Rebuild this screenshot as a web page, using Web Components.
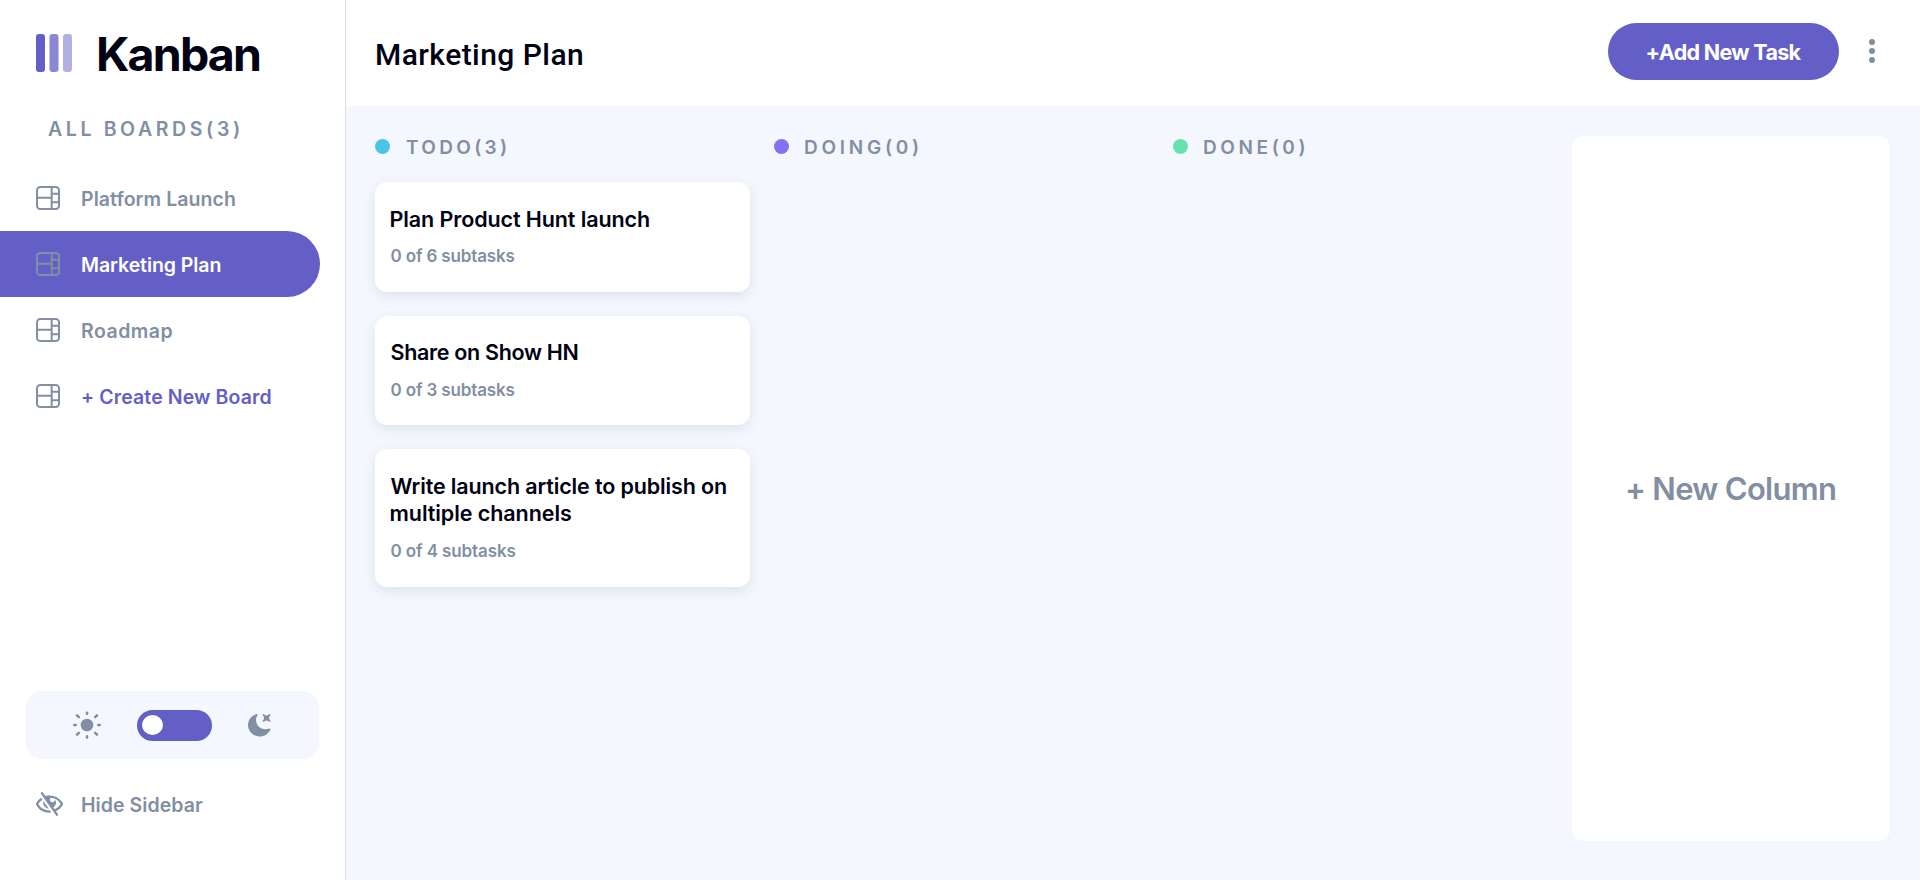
<!DOCTYPE html>
<html lang="en">
<head>
<meta charset="utf-8">
<title>Kanban</title>
<style>
  html, body { height: 100%; }
  body {
    margin: 0;
    font-family: Inter, "Liberation Sans", sans-serif;
    --accent: #635fc7;
    --muted: #828fa3;
    --ink: #000112;
    --canvas: #f4f7fd;
  }
</style>
</head>
<body>
<kanban-app></kanban-app>
<script>
const define = (name, html, setup) => {
  const tpl = document.createElement('template');
  tpl.innerHTML = html;
  customElements.define(name, class extends HTMLElement {
    connectedCallback() {
      if (this.shadowRoot) return;
      this.attachShadow({ mode: 'open' }).append(tpl.content.cloneNode(true));
      if (setup) setup(this, this.shadowRoot);
    }
  });
};

// A one-line label tracked so that its glyphs span the width given in "span".
const ctx = document.createElement('canvas').getContext('2d');
define('tracked-label', `
  <style>:host { display: block; white-space: nowrap; flex: none; }</style><slot></slot>`,
  (el) => {
    const text = el.textContent.trim();
    const cs = getComputedStyle(el);
    ctx.font = `${cs.fontWeight} ${cs.fontSize} ${cs.fontFamily}`;
    const m = ctx.measureText(text);
    const drawn = m.actualBoundingBoxRight + m.actualBoundingBoxLeft;
    const span = Number(el.getAttribute('span'));
    el.style.letterSpacing = ((span - drawn) / (text.length - 1)).toFixed(3) + 'px';
    el.style.marginLeft = m.actualBoundingBoxLeft.toFixed(2) + 'px';
    el.style.width = span + 'px';
  });

const icons = {
  board: ['0 0 16 16', '<path d="M0 2.889A2.889 2.889 0 0 1 2.889 0H13.11A2.889 2.889 0 0 1 16 2.889V13.11A2.888 2.888 0 0 1 13.111 16H2.89A2.889 2.889 0 0 1 0 13.111V2.89Zm1.333 5.555v4.667c0 .859.697 1.556 1.556 1.556h6.889V8.444H1.333Zm8.445-1.333V1.333h-6.89A1.556 1.556 0 0 0 1.334 2.89V7.11h8.445Zm4.889-1.333H11.11v4.444h3.556V5.778Zm0 5.778H11.11v3.11h2a1.556 1.556 0 0 0 1.556-1.555v-1.555Zm0-7.112V2.89a1.555 1.555 0 0 0-1.556-1.556h-2v3.111h3.556Z"/>'],
  hide: ['0 0 18 16', '<path d="M8.522 11.223a4.252 4.252 0 0 1-3.654-5.22l3.654 5.22ZM9 12.25A8.685 8.685 0 0 1 1.5 8a8.612 8.612 0 0 1 2.76-2.864l-.86-1.23A10.112 10.112 0 0 0 .208 7.238a1.5 1.5 0 0 0 0 1.524A10.187 10.187 0 0 0 9 13.75c.414 0 .828-.025 1.239-.074l-1-1.43A8.88 8.88 0 0 1 9 12.25Zm8.792-3.488a10.14 10.14 0 0 1-4.486 4.046l1.504 2.148a.375.375 0 0 1-.092.523l-.648.453a.375.375 0 0 1-.523-.092L3.19 1.044A.375.375 0 0 1 3.282.52L3.93.068a.375.375 0 0 1 .523.092l1.735 2.479A10.308 10.308 0 0 1 9 2.25c3.746 0 7.031 2 8.792 4.988a1.5 1.5 0 0 1 0 1.524ZM16.5 8a8.674 8.674 0 0 0-6.755-4.219A1.75 1.75 0 1 0 12.75 5v-.001a4.25 4.25 0 0 1-1.154 5.366l.834 1.192A8.641 8.641 0 0 0 16.5 8Z"/>'],
  sun: ['-14 -14 28 28', '<circle r="6.3"/><path fill="none" stroke="currentColor" stroke-width="2.6" stroke-linecap="round" d="M0-12.3v1M0 11.3v1.1M-12.7 0h1.4M11.3 0h1.4M-10-9.6l1.8 1.8M10-9.6L8.2-7.8M-10 9.6l1.8-1.8M10 9.6L8.2 7.8"/>'],
  moon: ['0 0 16 16', '<path d="M6.474.682c.434-.11.718.406.481.78A6.067 6.067 0 0 0 6.01 4.72c0 3.418 2.827 6.187 6.314 6.187.89.002 1.77-.182 2.584-.54.408-.18.894.165.724.57-1.16 2.775-3.944 4.73-7.194 4.73-4.292 0-7.771-3.41-7.771-7.615 0-3.541 2.466-6.518 5.807-7.37Zm8.433.07c.442-.294.969.232.674.674l-.525.787a1.943 1.943 0 0 0 0 2.157l.525.788c.295.441-.232.968-.674.673l-.787-.525a1.943 1.943 0 0 0-2.157 0l-.786.525c-.442.295-.97-.232-.675-.673l.525-.788a1.943 1.943 0 0 0 0-2.157l-.525-.787c-.295-.442.232-.968.674-.673l.787.525a1.943 1.943 0 0 0 2.157 0l.787-.526Z"/>'],
  dots: ['0 0 6 24', '<circle cx="3" cy="3" r="3"/><circle cx="3" cy="12" r="3"/><circle cx="3" cy="21" r="3"/>'],
  logo: ['0 0 36 38', '<rect width="9" height="38" rx="3"/><rect x="13.5" width="9" height="38" rx="3" opacity=".75"/><rect x="27" width="9" height="38" rx="3" opacity=".5"/>']
};
define('app-icon', `
  <style>:host { display: block; flex: none; color: var(--muted); } svg { display: block; width: 100%; height: 100%; fill: currentColor; }</style>
  <svg></svg>`,
  (el, root) => {
    const [box, body] = icons[el.getAttribute('name')];
    const svg = root.querySelector('svg');
    svg.setAttribute('viewBox', box);
    svg.innerHTML = body;
  });

define('nav-item', `
  <style>
    :host { display: flex; align-items: center; gap: 22px; height: 66px; width: 320px; box-sizing: border-box; padding-left: 36px;
      color: var(--muted); font-size: 19.5px; font-weight: 600; line-height: 26px; }
    :host([active]) { background: var(--accent); color: #fff; border-radius: 0 33px 33px 0; }
    :host([create]) { color: var(--accent); }
    app-icon { width: 24px; height: 24px; }
    ::slotted(*) { padding-top: 2px; }
  </style>
  <app-icon name="board"></app-icon><slot></slot>`);

define('theme-switch', `
  <style>
    :host { display: flex; align-items: center; height: 68px; width: 293px; box-sizing: border-box; margin-left: 26px;
      padding-left: 47px; background: var(--canvas); border-radius: 16px; }
    .sun { width: 28px; height: 28px; margin-top: -1px; }
    .track { display: flex; align-items: center; width: 75px; height: 31px; margin: 1px 35px 0 36px; box-sizing: border-box; padding-left: 5px;
      background: var(--accent); border-radius: 16px; }
    .knob { width: 21px; height: 20px; border-radius: 50%; background: #fff; margin-top: -1px; }
    .moon { width: 24px; height: 24px; margin-top: -1px; }
  </style>
  <app-icon class="sun" name="sun"></app-icon>
  <div class="track"><div class="knob"></div></div>
  <app-icon class="moon" name="moon"></app-icon>`);

define('side-bar', `
  <style>
    :host { display: flex; flex-direction: column; width: 346px; height: 100%; box-sizing: border-box; border-right: 1px solid #dcdee3; background: #fff; }
    .brand { display: flex; align-items: center; gap: 27px; height: 106px; padding-left: 36px; box-sizing: border-box;
      color: var(--ink); font-size: 46.5px; font-weight: 700; line-height: 60px; }
    .brand app-icon { width: 36px; height: 38px; color: var(--accent); }
    .brand tracked-label { padding-top: 2px; }
    .all { padding: 10px 0 23px 48px; font-size: 19.5px; font-weight: 600; line-height: 26px; color: var(--muted); }
    .foot { margin-top: auto; padding-bottom: 51px; }
    .hide { display: flex; align-items: center; gap: 19px; height: 48px; margin-top: 22px; padding: 0 0 0 36px;
      color: var(--muted); font-size: 19.5px; font-weight: 600; line-height: 26px; }
    .hide app-icon { width: 27px; height: 24px; margin-top: -3px; }
  </style>
  <div class="brand"><app-icon name="logo"></app-icon><tracked-label span="161">Kanban</tracked-label></div>
  <div class="all"><tracked-label span="191">ALL BOARDS(3)</tracked-label></div>
  <nav>
    <nav-item><tracked-label span="153">Platform Launch</tracked-label></nav-item>
    <nav-item active><tracked-label span="138.5">Marketing Plan</tracked-label></nav-item>
    <nav-item><tracked-label span="90.5">Roadmap</tracked-label></nav-item>
    <nav-item create><tracked-label span="188.5">+ Create New Board</tracked-label></nav-item>
  </nav>
  <div class="foot">
    <theme-switch></theme-switch>
    <div class="hide"><app-icon name="hide"></app-icon><tracked-label span="121">Hide Sidebar</tracked-label></div>
  </div>`);

define('top-bar', `
  <style>
    :host { display: flex; align-items: center; height: 106px; box-sizing: border-box; padding: 0 45px 0 31px; background: #fff; }
    .title { font: 500 30px/40px Roboto, sans-serif; color: var(--ink); padding-top: 3px; }
    button { display: flex; align-items: center; justify-content: center; width: 231px; height: 57px; margin: -3px 30px 0 auto; padding: 1px 0 0; border: 0; border-radius: 29px;
      background: var(--accent); color: #fff; font: 700 21.5px/28px Inter, sans-serif; }
    app-icon { width: 6px; height: 24px; margin-top: -4px; }
  </style>
  <tracked-label class="title" span="205">Marketing Plan</tracked-label>
  <button><tracked-label span="155">+Add New Task</tracked-label></button>
  <app-icon name="dots"></app-icon>`);

define('task-card', `
  <style>
    :host { display: block; min-height: 109.67px; box-sizing: border-box; padding: 23.5px 15.5px 24.7px; background: #fff; border-radius: 12px;
      box-shadow: 0 4px 12px rgba(54, 78, 126, .12); }
    .title { font-size: 21.5px; font-weight: 600; line-height: 27.5px; color: var(--ink); }
    .sub { margin-top: 13px; font-size: 17px; font-weight: 600; line-height: 21px; color: var(--muted); }
  </style>
  <div class="title"><slot></slot></div>
  <div class="sub"><slot name="sub"></slot></div>`);

define('board-column', `
  <style>
    :host { display: flex; flex-direction: column; width: 375px; flex: none; }
    header { display: flex; align-items: center; gap: 16px; height: 22px; margin-bottom: 24px;
      color: var(--muted); font-size: 19px; font-weight: 600; line-height: 22px; }
    i { width: 15px; height: 15px; border-radius: 50%; background: var(--dot); margin-top: -1px; }
    ::slotted([slot="name"]) { padding-top: 2px; }
    .cards { display: flex; flex-direction: column; gap: 24px; }
  </style>
  <header><i></i><slot name="name"></slot></header>
  <div class="cards"><slot></slot></div>`);

define('new-column', `
  <style>
    :host { display: flex; align-items: center; justify-content: center; width: 318px; box-sizing: border-box; background: #fff; border-radius: 12px;
      color: var(--muted); font-size: 31px; font-weight: 600; line-height: 40px; padding-right: 2px; }
  </style>
  <tracked-label span="208">+ New Column</tracked-label>`);

define('kanban-app', `
  <style>
    :host { display: grid; grid-template-columns: 346px 1fr; height: 100vh; background: var(--canvas); }
    main { display: flex; flex-direction: column; min-width: 0; }
    .board { flex: 1; display: flex; gap: 24px; padding: 30px 30px 39px 29px; }
  </style>
  <side-bar></side-bar>
  <main>
    <top-bar></top-bar>
    <section class="board">
      <board-column style="--dot:#49c4e5">
        <tracked-label slot="name" span="100">TODO(3)</tracked-label>
        <task-card><tracked-label span="258.5">Plan Product Hunt launch</tracked-label><tracked-label slot="sub" span="124">0 of 6 subtasks</tracked-label></task-card>
        <task-card><tracked-label span="187">Share on Show HN</tracked-label><tracked-label slot="sub" span="124">0 of 3 subtasks</tracked-label></task-card>
        <task-card><tracked-label span="335.5">Write launch article to publish on</tracked-label><tracked-label span="180.5">multiple channels</tracked-label><tracked-label slot="sub" span="125">0 of 4 subtasks</tracked-label></task-card>
      </board-column>
      <board-column style="--dot:#8471f2"><tracked-label slot="name" span="113">DOING(0)</tracked-label></board-column>
      <board-column style="--dot:#67e2ae"><tracked-label slot="name" span="100.5">DONE(0)</tracked-label></board-column>
      <new-column></new-column>
    </section>
  </main>`);
</script>
</body>
</html>
